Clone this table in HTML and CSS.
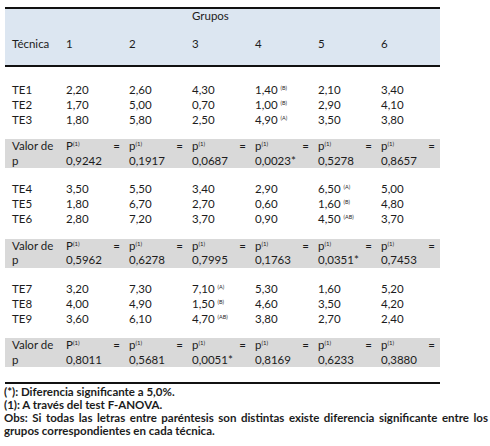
FILE: index.html
```html
<!DOCTYPE html>
<html lang="es">
<head>
  <meta charset="UTF-8" />
  <title>Grupos por técnica</title>
  <link rel="stylesheet" href="styles.css">
</head>
<body>
  <div class="tabla">
    <div class="cabecera">
      <div class="fila grupos">
        <span></span><span></span><span></span><span>Grupos</span>
      </div>
      <div class="fila titulos">
        <span>Técnica</span><span>1</span><span>2</span><span>3</span><span>4</span><span>5</span><span>6</span>
      </div>
    </div>

    <div class="bloque primero">
      <div class="fila"><span>TE1</span><span>2,20</span><span>2,60</span><span>4,30</span><span>1,40 <sup>(B)</sup></span><span>2,10</span><span>3,40</span></div>
      <div class="fila"><span>TE2</span><span>1,70</span><span>5,00</span><span>0,70</span><span>1,00 <sup>(B)</sup></span><span>2,90</span><span>4,10</span></div>
      <div class="fila"><span>TE3</span><span>1,80</span><span>5,80</span><span>2,50</span><span>4,90 <sup>(A)</sup></span><span>3,50</span><span>3,80</span></div>
    </div>
    <div class="fila valor">
      <span>Valor de<br>p</span>
      <span><b class="igual"><i>P<sup>(1)</sup></i><i>=</i></b>0,9242</span>
      <span><b class="igual"><i>p<sup>(1)</sup></i><i>=</i></b>0,1917</span>
      <span><b class="igual"><i>p<sup>(1)</sup></i><i>=</i></b>0,0687</span>
      <span><b class="igual"><i>p<sup>(1)</sup></i><i>=</i></b>0,0023*</span>
      <span><b class="igual"><i>p<sup>(1)</sup></i><i>=</i></b>0,5278</span>
      <span><b class="igual"><i>p<sup>(1)</sup></i><i>=</i></b>0,8657</span>
    </div>

    <div class="bloque">
      <div class="fila"><span>TE4</span><span>3,50</span><span>5,50</span><span>3,40</span><span>2,90</span><span>6,50 <sup>(A)</sup></span><span>5,00</span></div>
      <div class="fila"><span>TE5</span><span>1,80</span><span>6,70</span><span>2,70</span><span>0,60</span><span>1,60 <sup>(B)</sup></span><span>4,80</span></div>
      <div class="fila"><span>TE6</span><span>2,80</span><span>7,20</span><span>3,70</span><span>0,90</span><span>4,50 <sup>(AB)</sup></span><span>3,70</span></div>
    </div>
    <div class="fila valor">
      <span>Valor de<br>p</span>
      <span><b class="igual"><i>P<sup>(1)</sup></i><i>=</i></b>0,5962</span>
      <span><b class="igual"><i>p<sup>(1)</sup></i><i>=</i></b>0,6278</span>
      <span><b class="igual"><i>p<sup>(1)</sup></i><i>=</i></b>0,7995</span>
      <span><b class="igual"><i>p<sup>(1)</sup></i><i>=</i></b>0,1763</span>
      <span><b class="igual"><i>p<sup>(1)</sup></i><i>=</i></b>0,0351*</span>
      <span><b class="igual"><i>p<sup>(1)</sup></i><i>=</i></b>0,7453</span>
    </div>

    <div class="bloque">
      <div class="fila"><span>TE7</span><span>3,20</span><span>7,30</span><span>7,10 <sup>(A)</sup></span><span>5,30</span><span>1,60</span><span>5,20</span></div>
      <div class="fila"><span>TE8</span><span>4,00</span><span>4,90</span><span>1,50 <sup>(B)</sup></span><span>4,60</span><span>3,50</span><span>4,20</span></div>
      <div class="fila"><span>TE9</span><span>3,60</span><span>6,10</span><span>4,70 <sup>(AB)</sup></span><span>3,80</span><span>2,70</span><span>2,40</span></div>
    </div>
    <div class="fila valor">
      <span>Valor de<br>p</span>
      <span><b class="igual"><i>P<sup>(1)</sup></i><i>=</i></b>0,8011</span>
      <span><b class="igual"><i>p<sup>(1)</sup></i><i>=</i></b>0,5681</span>
      <span><b class="igual"><i>p<sup>(1)</sup></i><i>=</i></b>0,0051*</span>
      <span><b class="igual"><i>p<sup>(1)</sup></i><i>=</i></b>0,8169</span>
      <span><b class="igual"><i>p<sup>(1)</sup></i><i>=</i></b>0,6233</span>
      <span><b class="igual"><i>p<sup>(1)</sup></i><i>=</i></b>0,3880</span>
    </div>
  </div>

  <div class="notas">
    <p>(*): Diferencia significante a 5,0%.</p>
    <p>(1): A través del test F-ANOVA.</p>
    <p class="justo">Obs: Si todas las letras entre paréntesis son distintas existe diferencia significante entre los</p>
    <p>grupos correspondientes en cada técnica.</p>
  </div>
</body>
</html>
```

FILE: styles.css
```css
body {
  margin: 0;
  font-family: Lato, "Liberation Sans", sans-serif;
  font-size: 11.5px;
  color: #1c1c1c;
  background-color: #ffffff;
}
.tabla {
  width: 435px;
  margin: 7px 0 0 5px;
  border-top: 2px solid #111;
  border-bottom: 2px solid #111;
  padding-bottom: 15px;
}
.cabecera {
  height: 56px;
  background-color: #dce6f1;
  border-bottom: 2px solid #111;
}
.fila {
  display: grid;
  grid-template-columns: 57px repeat(6, 63px);
  line-height: 15px;
}
.fila span {
  padding-left: 4px;
  white-space: nowrap;
}
.fila span:first-child {
  padding-left: 7px;
}
.grupos {
  line-height: 14px;
}
.titulos {
  line-height: 14px;
  margin-top: 14px;
}
.bloque {
  padding: 13px 0 12.5px;
}
.bloque.primero {
  padding-top: 14.5px;
}
sup {
  font-size: 5.5px;
  line-height: 0;
  vertical-align: 4px;
}
.valor {
  background-color: #d9d9d9;
  line-height: 14.5px;
}
.valor span {
  padding-right: 5px;
}
.igual {
  display: flex;
  justify-content: space-between;
  font-weight: normal;
}
.igual i {
  font-style: normal;
}
.igual sup {
  font-size: 6px;
}
.notas {
  margin: 1px 0 0 4px;
  width: 484px;
  font-weight: bold;
  line-height: 13px;
}
.notas p {
  margin: 0;
}
.justo {
  text-align: justify;
  text-align-last: justify;
}
```
